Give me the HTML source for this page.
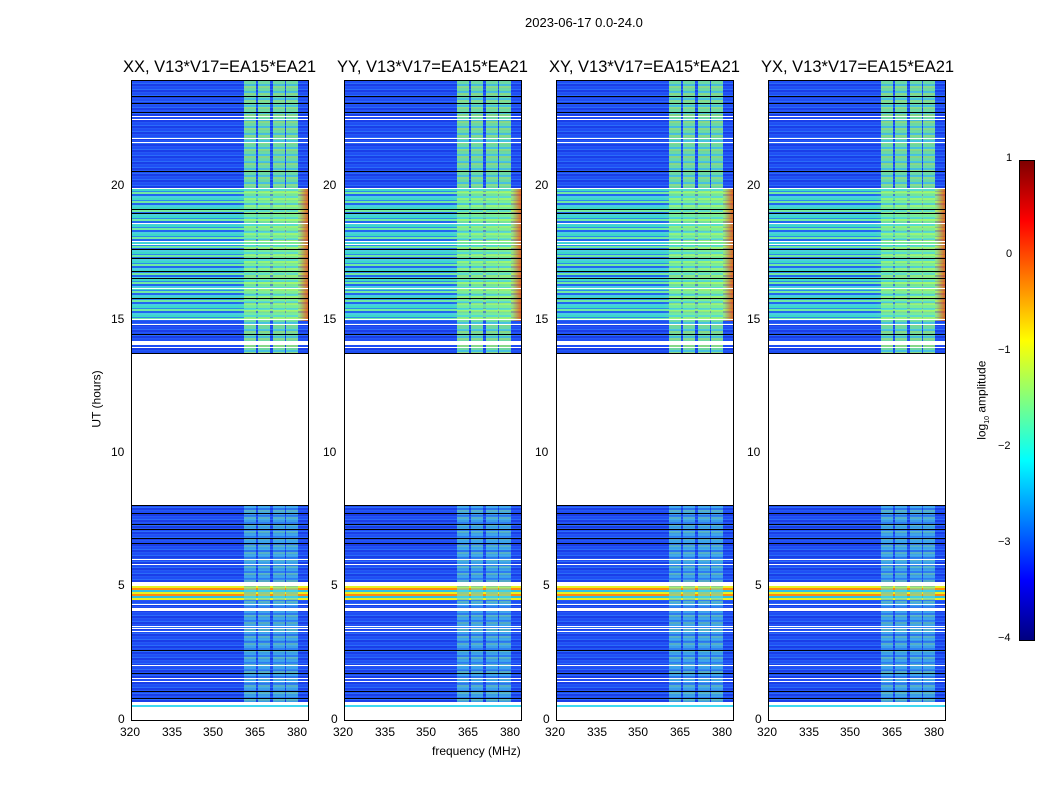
<!DOCTYPE html>
<html><head><meta charset="utf-8"><style>
body{margin:0;width:1050px;height:800px;background:#fff;position:relative;overflow:hidden;font-family:"Liberation Sans",sans-serif;color:#000}
.t{position:absolute;white-space:nowrap}
.ax{position:absolute;top:80px;width:176px;height:639px;border:1px solid #000;background:#fff;overflow:hidden}
.ax div{position:absolute}
.up{left:0;right:0;top:0;height:273px;background:repeating-linear-gradient(to bottom,#1f4ef5 0 2px,#2a6cf8 2px 3px,#1a3ee8 3px 5px,#2458f4 5px 6px)}
.lo{left:0;right:0;top:424px;height:202px;background:repeating-linear-gradient(to bottom,#1f4ef5 0 2px,#2a6cf8 2px 3px,#1a3ee8 3px 5px,#2458f4 5px 6px)}
.gr{left:0;right:0;top:108px;height:132px;background:linear-gradient(to right,rgba(0,0,0,0) 0,rgba(0,0,0,0) 60%,rgba(220,240,60,.5) 95%,rgba(255,80,0,.8) 100%),repeating-linear-gradient(to bottom,#3cd8c8 0 2px,#2a8af0 2px 3px,#70eaa0 3px 5px,#2266f0 5px 7px,#48d0e0 7px 9px)}
.bd{width:12px;background:repeating-linear-gradient(to bottom,rgba(120,240,150,.85) 0 3px,rgba(80,220,220,.8) 3px 5px,rgba(160,250,110,.8) 5px 7px)}
.lb{width:12px;top:424px;height:202px;background:repeating-linear-gradient(to bottom,rgba(80,220,230,.6) 0 3px,rgba(60,170,240,.5) 3px 5px,rgba(120,240,170,.6) 5px 7px)}
.yl{left:0;right:0;top:505px;height:14px;background:repeating-linear-gradient(to bottom,#e8f020 0 2px,#ff8a10 2px 4px,#30c0e0 4px 6px)}
.ln{left:0;right:0;top:0;bottom:0;background:
linear-gradient(#000,#000) 0 15px/100% 1px no-repeat,
linear-gradient(#000,#000) 0 22px/100% 1px no-repeat,
linear-gradient(#000,#000) 0 31px/100% 1px no-repeat,
linear-gradient(#fff,#fff) 0 35px/100% 1px no-repeat,
linear-gradient(#fff,#fff) 0 38px/100% 1px no-repeat,
linear-gradient(#fff,#fff) 0 57px/100% 1px no-repeat,
linear-gradient(#fff,#fff) 0 61px/100% 1px no-repeat,
linear-gradient(#000,#000) 0 90px/100% 1px no-repeat,
linear-gradient(#fff,#fff) 0 107px/100% 1px no-repeat,
linear-gradient(#000,#000) 0 128px/100% 1px no-repeat,
linear-gradient(#000,#000) 0 132px/100% 1px no-repeat,
linear-gradient(#fff,#fff) 0 142px/100% 1px no-repeat,
linear-gradient(#fff,#fff) 0 160px/100% 1px no-repeat,
linear-gradient(#fff,#fff) 0 163px/100% 1px no-repeat,
linear-gradient(#000,#000) 0 168px/100% 1px no-repeat,
linear-gradient(#000,#000) 0 177px/100% 1px no-repeat,
linear-gradient(#000,#000) 0 190px/100% 1px no-repeat,
linear-gradient(#000,#000) 0 197px/100% 1px no-repeat,
linear-gradient(#fff,#fff) 0 207px/100% 1px no-repeat,
linear-gradient(#000,#000) 0 217px/100% 1px no-repeat,
linear-gradient(#fff,#fff) 0 238px/100% 1px no-repeat,
linear-gradient(#fff,#fff) 0 243px/100% 1px no-repeat,
linear-gradient(#000,#000) 0 253px/100% 1px no-repeat,
linear-gradient(#fff,#fff) 0 260px/100% 4px no-repeat,
linear-gradient(#fff,#fff) 0 266px/100% 1px no-repeat,
linear-gradient(#000,#000) 0 272px/100% 1px no-repeat,
linear-gradient(#000,#000) 0 424px/100% 1px no-repeat,
linear-gradient(#000,#000) 0 432px/100% 1px no-repeat,
linear-gradient(#000,#000) 0 443px/100% 1px no-repeat,
linear-gradient(#000,#000) 0 448px/100% 1px no-repeat,
linear-gradient(#000,#000) 0 457px/100% 1px no-repeat,
linear-gradient(#000,#000) 0 462px/100% 1px no-repeat,
linear-gradient(#fff,#fff) 0 478px/100% 1px no-repeat,
linear-gradient(#fff,#fff) 0 483px/100% 1px no-repeat,
linear-gradient(#fff,#fff) 0 501px/100% 4px no-repeat,
linear-gradient(#fff,#fff) 0 523px/100% 1px no-repeat,
linear-gradient(#fff,#fff) 0 527px/100% 3px no-repeat,
linear-gradient(#fff,#fff) 0 545px/100% 1px no-repeat,
linear-gradient(#fff,#fff) 0 547px/100% 1px no-repeat,
linear-gradient(#fff,#fff) 0 550px/100% 1px no-repeat,
linear-gradient(#000,#000) 0 569px/100% 1px no-repeat,
linear-gradient(#fff,#fff) 0 584px/100% 1px no-repeat,
linear-gradient(#000,#000) 0 592px/100% 1px no-repeat,
linear-gradient(#fff,#fff) 0 597px/100% 1px no-repeat,
linear-gradient(#fff,#fff) 0 600px/100% 1px no-repeat,
linear-gradient(#000,#000) 0 610px/100% 1px no-repeat,
linear-gradient(#000,#000) 0 617px/100% 1px no-repeat,
linear-gradient(#fff,#fff) 0 621px/100% 3px no-repeat,
linear-gradient(#40d8f0,#40d8f0) 0 624px/100% 2px no-repeat}
.tk{position:absolute;font-size:12px}
.ti{position:absolute;top:58px;font-size:16.5px;white-space:nowrap}
.cb{position:absolute;left:1019px;top:160px;width:14px;height:479px;border:1px solid #000;background:linear-gradient(to bottom,#7f0000 0%,#ff0000 12.5%,#ff8000 25%,#ffff00 37.5%,#80ff80 50%,#00ffff 62.5%,#0080ff 75%,#0000ff 87.5%,#00007f 100%)}
</style></head><body>
<div class="t" style="left:525px;top:15px;font-size:13px">2023-06-17 0.0-24.0</div>

<div class="ti" style="left:123px">XX, V13*V17=EA15*EA21</div>
<div class="ti" style="left:337px">YY, V13*V17=EA15*EA21</div>
<div class="ti" style="left:549px">XY, V13*V17=EA15*EA21</div>
<div class="ti" style="left:761px">YX, V13*V17=EA15*EA21</div>

<div class="ax" style="left:131px"><div class="up"></div><div class="gr"></div><div class="lo"></div><div class="yl"></div><div class="bd" style="left:112px;top:0;height:273px"></div><div class="bd" style="left:126px;top:0;height:273px"></div><div class="bd" style="left:141px;top:0;height:273px"></div><div class="bd" style="left:154px;top:0;height:273px"></div><div class="lb" style="left:112px"></div><div class="lb" style="left:126px"></div><div class="lb" style="left:141px"></div><div class="lb" style="left:154px"></div><div class="ln"></div></div>
<div class="ax" style="left:344px"><div class="up"></div><div class="gr"></div><div class="lo"></div><div class="yl"></div><div class="bd" style="left:112px;top:0;height:273px"></div><div class="bd" style="left:126px;top:0;height:273px"></div><div class="bd" style="left:141px;top:0;height:273px"></div><div class="bd" style="left:154px;top:0;height:273px"></div><div class="lb" style="left:112px"></div><div class="lb" style="left:126px"></div><div class="lb" style="left:141px"></div><div class="lb" style="left:154px"></div><div class="ln"></div></div>
<div class="ax" style="left:556px"><div class="up"></div><div class="gr"></div><div class="lo"></div><div class="yl"></div><div class="bd" style="left:112px;top:0;height:273px"></div><div class="bd" style="left:126px;top:0;height:273px"></div><div class="bd" style="left:141px;top:0;height:273px"></div><div class="bd" style="left:154px;top:0;height:273px"></div><div class="lb" style="left:112px"></div><div class="lb" style="left:126px"></div><div class="lb" style="left:141px"></div><div class="lb" style="left:154px"></div><div class="ln"></div></div>
<div class="ax" style="left:768px"><div class="up"></div><div class="gr"></div><div class="lo"></div><div class="yl"></div><div class="bd" style="left:112px;top:0;height:273px"></div><div class="bd" style="left:126px;top:0;height:273px"></div><div class="bd" style="left:141px;top:0;height:273px"></div><div class="bd" style="left:154px;top:0;height:273px"></div><div class="lb" style="left:112px"></div><div class="lb" style="left:126px"></div><div class="lb" style="left:141px"></div><div class="lb" style="left:154px"></div><div class="ln"></div></div>

<div class="tk" style="left:111px;top:178px">20</div><div class="tk" style="left:111px;top:312px">15</div><div class="tk" style="left:111px;top:445px">10</div><div class="tk" style="left:118px;top:578px">5</div><div class="tk" style="left:118px;top:712px">0</div>
<div class="tk" style="left:323px;top:178px">20</div><div class="tk" style="left:323px;top:312px">15</div><div class="tk" style="left:323px;top:445px">10</div><div class="tk" style="left:331px;top:578px">5</div><div class="tk" style="left:331px;top:712px">0</div>
<div class="tk" style="left:535px;top:178px">20</div><div class="tk" style="left:535px;top:312px">15</div><div class="tk" style="left:535px;top:445px">10</div><div class="tk" style="left:543px;top:578px">5</div><div class="tk" style="left:543px;top:712px">0</div>
<div class="tk" style="left:747px;top:178px">20</div><div class="tk" style="left:747px;top:312px">15</div><div class="tk" style="left:747px;top:445px">10</div><div class="tk" style="left:755px;top:578px">5</div><div class="tk" style="left:755px;top:712px">0</div>

<div class="tk" style="left:120px;top:725px">320</div><div class="tk" style="left:162px;top:725px">335</div><div class="tk" style="left:203px;top:725px">350</div><div class="tk" style="left:245px;top:725px">365</div><div class="tk" style="left:287px;top:725px">380</div>
<div class="tk" style="left:333px;top:725px">320</div><div class="tk" style="left:375px;top:725px">335</div><div class="tk" style="left:416px;top:725px">350</div><div class="tk" style="left:458px;top:725px">365</div><div class="tk" style="left:500px;top:725px">380</div>
<div class="tk" style="left:545px;top:725px">320</div><div class="tk" style="left:587px;top:725px">335</div><div class="tk" style="left:628px;top:725px">350</div><div class="tk" style="left:670px;top:725px">365</div><div class="tk" style="left:712px;top:725px">380</div>
<div class="tk" style="left:757px;top:725px">320</div><div class="tk" style="left:799px;top:725px">335</div><div class="tk" style="left:840px;top:725px">350</div><div class="tk" style="left:882px;top:725px">365</div><div class="tk" style="left:924px;top:725px">380</div>

<div class="t" style="left:432px;top:744px;font-size:12px">frequency (MHz)</div>
<div class="t" style="left:68px;top:392px;font-size:12px;transform:rotate(-90deg);transform-origin:center">UT (hours)</div>

<div class="cb"></div>
<div class="tk" style="left:1006px;top:152px;font-size:11px">1</div>
<div class="tk" style="left:1006px;top:248px;font-size:11px">0</div>
<div class="tk" style="left:998px;top:344px;font-size:11px">−1</div>
<div class="tk" style="left:998px;top:440px;font-size:11px">−2</div>
<div class="tk" style="left:998px;top:536px;font-size:11px">−3</div>
<div class="tk" style="left:998px;top:632px;font-size:11px">−4</div>
<div class="t" style="left:943px;top:392px;font-size:12px;transform:rotate(-90deg)">log<sub style="font-size:7px">10</sub> amplitude</div>
</body></html>
